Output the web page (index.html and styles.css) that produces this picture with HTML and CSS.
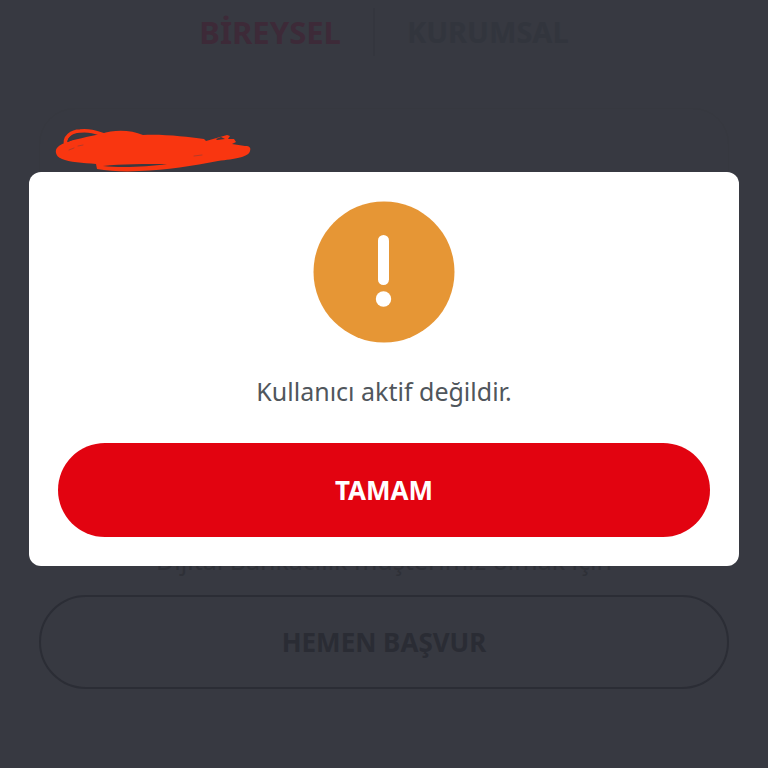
FILE: index.html
```html
<!DOCTYPE html>
<html lang="tr">
<head>
<meta charset="utf-8">
<meta name="viewport" content="width=device-width, initial-scale=1">
<title>Giriş</title>
<link rel="stylesheet" href="styles.css">
</head>
<body>
<main class="login">
  <nav class="tabs">
    <a class="tab tab-active" href="#bireysel">BİREYSEL</a>
    <a class="tab" href="#kurumsal">KURUMSAL</a>
  </nav>
  <section class="form-card"></section>
  <p class="hint">Dijital Bankacılık müşterimiz olmak için</p>
  <button class="apply" type="button">HEMEN BAŞVUR</button>
</main>
<div class="overlay">
  <div class="dialog" role="alertdialog" aria-modal="true" aria-describedby="message">
    <svg class="warning" viewBox="0 0 142 142" aria-hidden="true">
      <circle cx="71" cy="71" r="70.5" fill="#e69635"/>
      <rect x="65" y="34" width="11" height="50" rx="5.5" fill="#fff"/>
      <circle cx="70.5" cy="98" r="7.7" fill="#fff"/>
    </svg>
    <p class="message" id="message">Kullanıcı aktif değildir.</p>
    <button class="confirm" type="button">TAMAM</button>
  </div>
</div>
<svg class="scribble" viewBox="0 0 200 46" aria-hidden="true">
  <path fill="#f93610" d="M1 25C0 20 4 17 10 15C19 11 33 9 46 6C60 1 76 2 88 7C110 6 132 9 149 11L151 13L172 7L175 8L173 11L179 11L181 14L177 16L190 18C195 18 196 20 195 23C194 29 180 31 163 33C138 38 112 42 84 43C70 44 54 43 42 41L41 36C28 35 14 34 7 31C3 29 2 28 1 25Z"/>
  <path fill="none" stroke="#f93610" stroke-width="3.5" stroke-linecap="round" d="M11 18C8 9 17 3 25 3C34 2 40 4 49 7"/>
  <path fill="#3a3940" d="M13 12C14 8 20 5 27 5C32 5 35 6 37 7C29 8 20 10 13 14ZM48 38C66 36 91 36 112 36C92 39 65 40 48 38ZM161 11L166 9L170 11L162 12Z"/>
  <path fill="none" stroke="#b63b28" stroke-linecap="round" d="M14 22L19 20M23 18L28 17M139 28L147 27"/>
</svg>
</body>
</html>
```
FILE: styles.css
```css
* {
  box-sizing: border-box;
}

body {
  margin: 0;
  min-height: 100vh;
  background: #373941;
  font-family: "Noto Sans", "Open Sans", sans-serif;
}

.login {
  display: flex;
  flex-direction: column;
  padding: 8px 39px 80px;
}

.tabs {
  display: flex;
  justify-content: center;
  height: 48px;
}

.tab {
  padding: 0 32px;
  font-size: 29px;
  font-weight: 700;
  line-height: 48px;
  color: #32353d;
  text-decoration: none;
}

.tab-active {
  border-right: 2px solid #34363e;
  font-size: 31px;
  color: #3d2a38;
}

.form-card {
  height: 424px;
  margin-top: 52px;
  border: 1px solid #36383f;
  border-radius: 36px;
}

.hint {
  margin: 12px 0 19px;
  font-size: 25px;
  line-height: 32px;
  text-align: center;
  color: #2e3037;
}

.apply {
  height: 94px;
  border: 2px solid #2b2d35;
  border-radius: 47px;
  background: transparent;
  font: 700 26px "Noto Sans", "Open Sans", sans-serif;
  color: #2a2c34;
}

.overlay {
  position: absolute;
  inset: 0;
  padding: 172px 29px 0;
}

.dialog {
  display: flex;
  flex-direction: column;
  align-items: center;
  padding: 29px;
  border-radius: 12px;
  background: #fff;
}

.warning {
  width: 142px;
  height: 142px;
}

.message {
  margin: 28px 0 32px;
  font-size: 25px;
  line-height: 40px;
  text-align: center;
  color: #50565c;
}

.confirm {
  width: 100%;
  height: 94px;
  border: 0;
  border-radius: 47px;
  background: #e20310;
  font: 700 26px "Noto Sans", "Open Sans", sans-serif;
  color: #fff;
}

.scribble {
  position: absolute;
  top: 128px;
  left: 55px;
  width: 200px;
  height: 46px;
}
```
